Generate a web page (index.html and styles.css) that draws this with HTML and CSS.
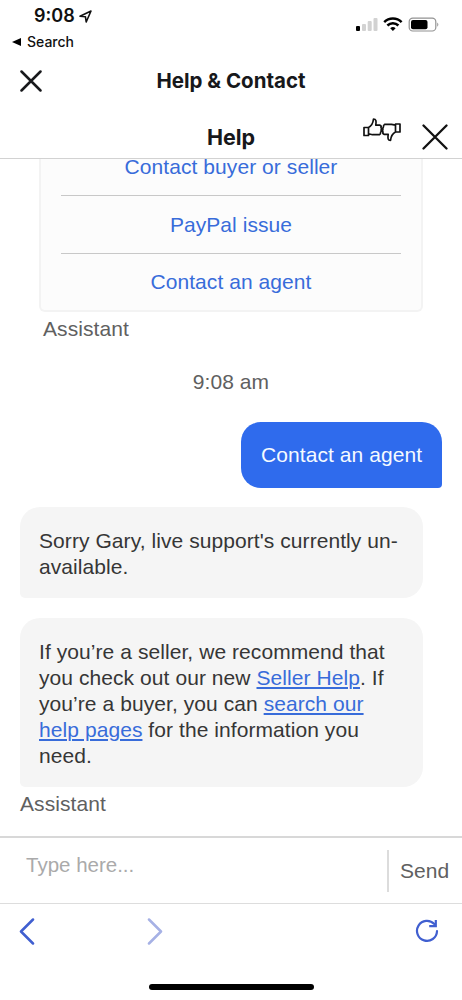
FILE: index.html
```html
<!DOCTYPE html>
<html lang="en">
<head>
<meta charset="utf-8">
<title>Help &amp; Contact</title>
<link rel="stylesheet" href="styles.css">
</head>
<body>
<div class="screen">
  <div class="status">
    <div class="status-left">
      <div class="clock"><span class="clock-time">9:08</span>
        <svg width="13" height="13" viewBox="0 0 13 13"><path d="M1 6.2 12 1 7.2 12 6.4 6.7Z" fill="none" stroke="#111" stroke-width="1.600" stroke-linejoin="round"/></svg>
      </div>
      <div class="back-app"><svg width="9" height="8" viewBox="0 0 9 8"><path d="M0 4 9 0V8Z"/></svg><span class="back-label">Search</span></div>
    </div>
    <svg class="status-icons" width="84" height="16" viewBox="0 0 84 16">
      <rect x="0" y="10" width="4" height="5" rx="1"/>
      <g fill="#d2d2d2"><rect x="6" y="8" width="4" height="7" rx="1"/><rect x="11.700" y="5" width="4" height="10" rx="1"/><rect x="17.500" y="2" width="4" height="13" rx="1"/></g>
      <g fill="none" stroke="#000" stroke-width="2.500"><path d="M28.200 6.200a12.300 12.300 0 0 1 17.400 0M31.400 9.500a7.800 7.800 0 0 1 11 0"/></g>
      <path d="m36.900 15-2.700-2.700a3.900 3.900 0 0 1 5.400 0Z"/>
      <rect x="53.200" y="2.200" width="26.600" height="12.800" rx="3.600" fill="none" stroke="#929292" stroke-width="1.200"/>
      <rect x="55" y="4" width="16.500" height="9.300" rx="2"/>
      <path d="M81.300 6.500q2 2.100 0 4.200Z" fill="#888"/>
    </svg>
  </div>
  <div class="titlebar">
    <svg class="close-page" width="22" height="22" viewBox="0 0 22 22"><path d="m1.500 1.500 19 19m0-19-19 19" fill="none" stroke="#18191c" stroke-width="2.500" stroke-linecap="round"/></svg>
    <h1 class="page-title">Help &amp; Contact</h1>
  </div>
  <div class="helpbar">
    <h2 class="help-title">Help</h2>
    <svg class="thumbs" width="38" height="25" viewBox="0 0 38 25">
      <g fill="none" stroke="#111" stroke-width="1.700" stroke-linejoin="round">
        <path d="M1 9.500h4.500v8H1ZM5.500 9.500c3-1.500 4.500-4 5-8.500 2.500 0 3 1.700 2.300 6.200H17q1.600.7 1 2.300.9 1.100.1 2.400.5 1.500-.5 2.500.1 1.700-1.200 2.300H9.500l-4-1"/>
        <path d="M37 6h-4.500v8H37ZM32.500 14c-3 1.500-4.500 4-5 8.500-2.500 0-3-1.700-2.300-6.200H21q-1.600-.7-1-2.300-.9-1.100-.1-2.400-.5-1.500.5-2.500-.1-1.700 1.200-2.700h6.900l4 .8"/>
      </g>
    </svg>
    <svg class="close-help" width="26" height="26" viewBox="0 0 26 26"><path d="m1.500 1.500 23 23m0-23-23 23" fill="none" stroke="#111" stroke-width="2.300" stroke-linecap="round"/></svg>
  </div>
  <main class="chat">
    <div class="options">
      <a class="option">Contact buyer or seller</a>
      <a class="option">PayPal issue</a>
      <a class="option">Contact an agent</a>
    </div>
    <div class="sender sender-card">Assistant</div>
    <div class="timestamp">9:08 am</div>
    <div class="bubble bubble-user">Contact an agent</div>
    <div class="bubble bubble-bot">Sorry Gary, live support's currently un-<br>available.</div>
    <div class="bubble bubble-bot">If you’re a seller, we recommend that<br>you check out our new <a class="link">Seller Help</a>. If<br>you’re a buyer, you can <a class="link">search our<br>help pages</a> for the information you<br>need.</div>
    <div class="sender">Assistant</div>
  </main>
  <div class="composer">
    <div class="input">Type here...</div>
    <div class="send">Send</div>
  </div>
  <div class="browser-bar">
    <svg width="16" height="27" viewBox="0 0 16 27"><path d="M14 1.500 2 13.500l12 12" fill="none" stroke="#405fd0" stroke-width="2.500" stroke-linecap="round" stroke-linejoin="round"/></svg>
    <svg class="forward" width="16" height="27" viewBox="0 0 16 27"><path d="m2 1.500 12 12-12 12" fill="none" stroke="#a6b1e5" stroke-width="2.500" stroke-linecap="round" stroke-linejoin="round"/></svg>
    <svg class="reload" width="24" height="24" viewBox="0 0 24 24"><path d="M22 12.200A10 10 0 1 1 19.300 5" fill="none" stroke="#405fd0" stroke-width="2.200" stroke-linecap="round"/><path d="M20.800 1v6.100h-6.600" fill="none" stroke="#405fd0" stroke-width="2.200"/></svg>
  </div>
  <div class="home"><div class="home-indicator"></div></div>
</div>
</body>
</html>
```
FILE: styles.css
```css
* { box-sizing: border-box; }
body { margin: 0; background: #fff; }
svg { display: block; flex: none; }
.screen {
  width: 462px;
  height: 1000px;
  display: flex;
  flex-direction: column;
  overflow: hidden;
  font: 21px/26px "Liberation Sans", Arial, sans-serif;
  letter-spacing: 0.07px;
  color: #363636;
}
.status {
  height: 56px;
  flex: none;
  display: flex;
  justify-content: space-between;
  padding: 5px 22px 0 12px;
  font-family: Inter, sans-serif;
  color: #111;
}
.clock { display: flex; align-items: center; gap: 4px; height: 22px; padding-left: 22px; }
.clock-time { font-size: 18px; font-weight: 600; letter-spacing: 0; }
.back-app { display: flex; align-items: center; gap: 6px; height: 20px; margin-top: 5px; }
.back-label { font-size: 14px; font-weight: 500; letter-spacing: 0; }
.status-icons { margin-top: 11px; }
.titlebar {
  height: 50px;
  flex: none;
  display: grid;
  grid-template-columns: 60px 1fr 60px;
  align-items: center;
}
.close-page { margin-left: 20px; }
.page-title, .help-title {
  margin: 0;
  font: 700 20.5px/26px Inter, sans-serif;
  letter-spacing: 0;
  color: #17181b;
  text-align: center;
}
.page-title { white-space: nowrap; }
.helpbar {
  height: 53px;
  flex: none;
  display: grid;
  grid-template-columns: 100px 1fr 41px 59px;
  align-items: center;
  padding-top: 10px;
  border-bottom: 1.5px solid #d2d2d2;
}
.help-title { grid-column: 2; font-size: 21.5px; }
.thumbs { margin: -13px 0 0 1px; }
.close-help { margin-left: 19px; }
.chat { flex: none; height: 677px; overflow: hidden; display: flex; flex-direction: column; }
.options {
  width: 384px;
  flex: none;
  margin: -21px 0 0 39px;
  padding: 0 20px;
  background: #fcfcfc;
  border: 2px solid #f3f3f3;
  border-top: 0;
  border-radius: 0 0 6px 6px;
}
.option {
  height: 58px;
  display: flex;
  align-items: center;
  justify-content: center;
  color: #386cda;
  border-bottom: 1px solid #c8c8c8;
}
.option:last-child { height: 56px; border-bottom: 0; }
.sender { color: #606060; margin: 4px 0 0 20px; }
.sender-card { margin-left: 43px; }
.timestamp { margin-top: 27px; text-align: center; color: #606060; }
.bubble { flex: none; padding: 20px; }
.bubble-user {
  align-self: flex-end;
  margin: 27px 20px 0 0;
  width: 201px;
  height: 66px;
  white-space: nowrap;
  background: #2f6bed;
  color: #f5faff;
  border-radius: 20px 20px 4px 20px;
}
.bubble-bot {
  width: 403px;
  margin: 19px 0 0 20px;
  padding: 21px 19px 18px;
  white-space: nowrap;
  background: #f5f5f5;
  border-radius: 20px 20px 20px 5px;
}
.bubble-bot + .bubble-bot { margin-top: 20px; }
.link { color: #386cda; text-decoration: underline; text-decoration-thickness: 1.5px; text-underline-offset: 2px; }
.composer {
  height: 68px;
  flex: none;
  display: flex;
  border-top: 2px solid #d8d8d8;
  border-bottom: 1px solid #ddd;
}
.input { flex: 1; padding: 14px 0 0 26px; font-size: 20.5px; letter-spacing: 0; color: #aaa; }
.send {
  width: 75px;
  height: 42px;
  margin-top: 12px;
  padding: 8px 0 0 11px;
  border-left: 2px solid #dcdcdc;
  color: #606060;
}
.browser-bar { height: 54px; flex: none; display: flex; align-items: center; padding: 0 23px 0 19px; }
.forward { margin-left: 112px; }
.reload { margin-left: auto; }
.home { flex: 1; display: flex; justify-content: center; padding-top: 26px; }
.home-indicator { width: 165px; height: 6px; border-radius: 3px; background: #000; }
```
